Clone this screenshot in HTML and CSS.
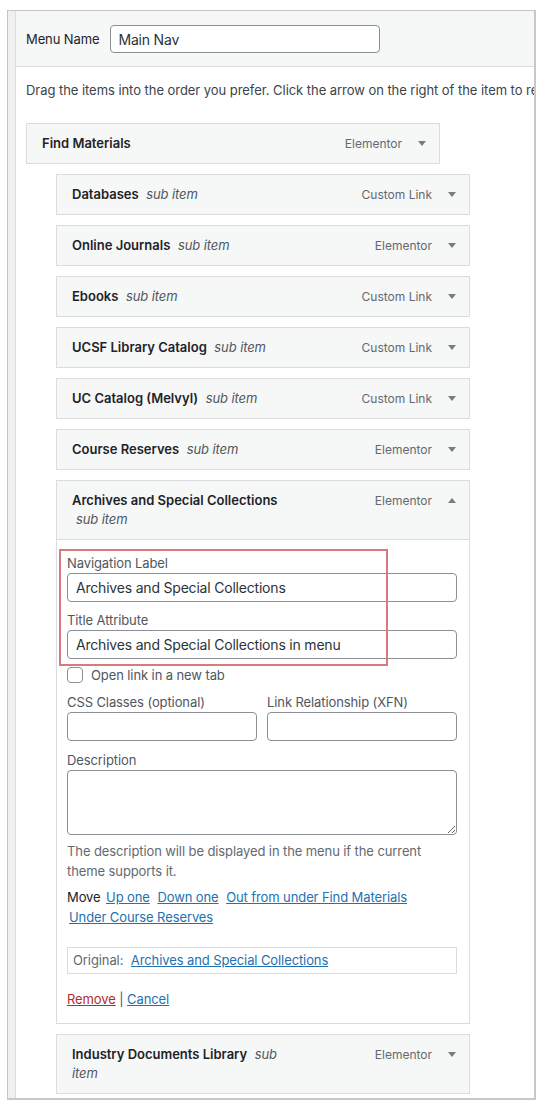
FILE: index.html
```
<!DOCTYPE html>
<html lang="en">
<head>
<meta charset="utf-8">
<title>Menu Structure</title>
<link rel="stylesheet" href="styles.css">
</head>
<body>
<div class="frame">
  <div class="strip"></div>
  <div class="main">
    <div class="menu-header">
      <label class="menu-name-label" for="menu-name">Menu Name</label>
      <input id="menu-name" class="menu-name-input" type="text" value="Main Nav">
    </div>
    <div class="menu-body">
      <p class="drag-instructions">Drag the items into the order you prefer. Click the arrow on the right of the item to reveal additional configuration options.</p>
      <ul class="menu-list">
        <li class="menu-item">
          <div class="item-handle">
            <span class="item-title"><span class="title-text">Find Materials</span></span>
            <span class="item-controls"><span class="item-type">Elementor</span><svg class="item-arrow" viewBox="0 0 8 5"><path d="M0 0H8L4 5Z"/></svg></span>
          </div>
        </li>
        <li class="menu-item depth-1">
          <div class="item-handle">
            <span class="item-title"><span class="title-text">Databases</span> <span class="is-submenu">sub item</span></span>
            <span class="item-controls"><span class="item-type">Custom Link</span><svg class="item-arrow" viewBox="0 0 8 5"><path d="M0 0H8L4 5Z"/></svg></span>
          </div>
        </li>
        <li class="menu-item depth-1">
          <div class="item-handle">
            <span class="item-title"><span class="title-text">Online Journals</span> <span class="is-submenu">sub item</span></span>
            <span class="item-controls"><span class="item-type">Elementor</span><svg class="item-arrow" viewBox="0 0 8 5"><path d="M0 0H8L4 5Z"/></svg></span>
          </div>
        </li>
        <li class="menu-item depth-1">
          <div class="item-handle">
            <span class="item-title"><span class="title-text">Ebooks</span> <span class="is-submenu">sub item</span></span>
            <span class="item-controls"><span class="item-type">Custom Link</span><svg class="item-arrow" viewBox="0 0 8 5"><path d="M0 0H8L4 5Z"/></svg></span>
          </div>
        </li>
        <li class="menu-item depth-1">
          <div class="item-handle">
            <span class="item-title"><span class="title-text">UCSF Library Catalog</span> <span class="is-submenu">sub item</span></span>
            <span class="item-controls"><span class="item-type">Custom Link</span><svg class="item-arrow" viewBox="0 0 8 5"><path d="M0 0H8L4 5Z"/></svg></span>
          </div>
        </li>
        <li class="menu-item depth-1">
          <div class="item-handle">
            <span class="item-title"><span class="title-text">UC Catalog (Melvyl)</span> <span class="is-submenu">sub item</span></span>
            <span class="item-controls"><span class="item-type">Custom Link</span><svg class="item-arrow" viewBox="0 0 8 5"><path d="M0 0H8L4 5Z"/></svg></span>
          </div>
        </li>
        <li class="menu-item depth-1">
          <div class="item-handle">
            <span class="item-title"><span class="title-text">Course Reserves</span> <span class="is-submenu">sub item</span></span>
            <span class="item-controls"><span class="item-type">Elementor</span><svg class="item-arrow" viewBox="0 0 8 5"><path d="M0 0H8L4 5Z"/></svg></span>
          </div>
        </li>
        <li class="menu-item depth-1 is-open">
          <div class="item-handle">
            <span class="item-title"><span class="title-text">Archives and Special Collections</span> <span class="is-submenu">sub item</span></span>
            <span class="item-controls"><span class="item-type">Elementor</span><svg class="item-arrow" viewBox="0 0 8 5"><path d="M0 5H8L4 0Z"/></svg></span>
          </div>
          <div class="item-settings">
            <div class="field">
              <label class="field-label" for="nav-label">Navigation Label</label>
              <input id="nav-label" class="field-input" type="text" value="Archives and Special Collections">
            </div>
            <div class="field field-title">
              <label class="field-label" for="title-attr">Title Attribute</label>
              <input id="title-attr" class="field-input" type="text" value="Archives and Special Collections in menu">
            </div>
            <div class="field-check">
              <span class="checkbox"></span>
              <span class="check-label">Open link in a new tab</span>
            </div>
            <div class="field-row">
              <div class="field-thin">
                <label class="field-label" for="css-classes">CSS Classes (optional)</label>
                <input id="css-classes" class="field-input thin" type="text">
              </div>
              <div class="field-thin">
                <label class="field-label" for="xfn">Link Relationship (XFN)</label>
                <input id="xfn" class="field-input thin" type="text">
              </div>
            </div>
            <div class="field field-desc">
              <label class="field-label" for="desc">Description</label>
              <textarea id="desc" class="field-textarea"></textarea>
              <p class="help-text">The description will be displayed in the menu if the current theme supports it.</p>
            </div>
            <p class="field-move">Move <a href="#">Up one</a> <a href="#">Down one</a> <a href="#">Out from under Find Materials</a> <a href="#">Under Course Reserves</a></p>
            <div class="original">Original: <a href="#">Archives and Special Collections</a></div>
            <p class="actions"><a class="remove" href="#">Remove</a> | <a href="#">Cancel</a></p>
            <div class="highlight"></div>
          </div>
        </li>
        <li class="menu-item depth-1">
          <div class="item-handle">
            <span class="item-title"><span class="title-text">Industry Documents Library</span> <span class="is-submenu">sub item</span></span>
            <span class="item-controls"><span class="item-type">Elementor</span><svg class="item-arrow" viewBox="0 0 8 5"><path d="M0 0H8L4 5Z"/></svg></span>
          </div>
        </li>
      </ul>
    </div>
  </div>
</div>
</body>
</html>
```

FILE: styles.css
```
* { box-sizing: border-box; }

body {
  margin: 0;
  background: #fff;
  font-family: Inter, "Liberation Sans", Arial, sans-serif;
  font-size: 13px;
  letter-spacing: -0.1px;
  color: #3c434a;
}

.frame {
  margin: 10px 0 0 7px;
  width: 529px;
  display: flex;
  border: 1px solid #c3c4c7;
  border-right: 2px solid #c8c8c8;
  border-bottom: 2px solid #c8c8c8;
}

.strip {
  flex: none;
  width: 8px;
  background: #f0f0f1;
  border-right: 1px solid #dcdcde;
}

.main {
  flex: 1;
  min-width: 0;
  overflow: hidden;
}

.menu-header {
  display: flex;
  align-items: center;
  background: #f6f7f7;
  border-bottom: 1px solid #dcdcde;
  padding: 14px 10px 13px;
}

.menu-name-label {
  color: #1d2327;
  margin-right: 10px;
  line-height: 20px;
}

.menu-name-input {
  width: 270px;
  height: 28px;
  margin: 0;
  padding: 0 8px;
  border: 1px solid #8c8f94;
  border-radius: 4px;
  font-family: Inter, "Liberation Sans", Arial, sans-serif;
  font-size: 14px;
  letter-spacing: -0.2px;
  color: #2c3338;
  background: #fff;
}

.drag-instructions {
  margin: 13px 0 0 10px;
  line-height: 20px;
  white-space: nowrap;
  letter-spacing: -0.05px;
  color: #3c434a;
}

.menu-list {
  list-style: none;
  margin: 23px 0 0;
  padding: 0 0 4px 10px;
}

.menu-item {
  width: 414px;
}

.menu-item + .menu-item {
  margin-top: 10px;
}

.depth-1 {
  margin-left: 30px;
}

.item-handle {
  display: flex;
  align-items: flex-start;
  border: 1px solid #dcdcde;
  background: #f6f7f7;
  padding: 10px 13px 10px 15px;
  line-height: 19px;
}

.item-title {
  width: 212px;
  color: #1d2327;
}

.title-text {
  font-weight: 600;
  letter-spacing: 0;
  white-space: nowrap;
}

.is-submenu {
  font-style: italic;
  font-weight: 400;
  color: #50575e;
  padding-left: 4px;
}

.item-controls {
  margin-left: auto;
  display: flex;
  align-items: center;
  height: 19px;
  color: #646970;
}

.item-type {
  font-size: 12px;
  letter-spacing: 0;
}

.item-arrow {
  width: 8px;
  height: 5px;
  margin-left: 16px;
  fill: #787c82;
}

.item-settings {
  position: relative;
  background: #fff;
  border: 1px solid #dcdcde;
  border-top: none;
  padding: 13px 10px 14px;
}

.field-label {
  display: block;
  line-height: 20px;
  color: #50575e;
}

.field-input {
  display: block;
  width: 390px;
  height: 29px;
  margin: 0;
  padding: 0 8px;
  border: 1px solid #8c8f94;
  border-radius: 4px;
  background: #fff;
  font-family: Inter, "Liberation Sans", Arial, sans-serif;
  font-size: 14px;
  letter-spacing: -0.2px;
  color: #2c3338;
}

.field-input.thin {
  width: 190px;
}

.field-title {
  margin-top: 8px;
}

.field-check {
  display: flex;
  align-items: center;
  margin-top: 8px;
  height: 16px;
  color: #50575e;
}

.checkbox {
  width: 16px;
  height: 16px;
  border: 1px solid #8c8f94;
  border-radius: 4px;
  background: #fff;
  margin-right: 8px;
}

.field-row {
  display: flex;
  gap: 10px;
  margin-top: 9px;
}

.field-desc {
  margin-top: 9px;
}

.field-textarea {
  display: block;
  width: 390px;
  height: 65px;
  margin: 0;
  border: 1px solid #8c8f94;
  border-radius: 4px;
  background: #fff;
  font-family: Inter, "Liberation Sans", Arial, sans-serif;
  font-size: 14px;
}

.help-text {
  width: 390px;
  margin: 6px 0 0;
  line-height: 20px;
  color: #646970;
}

.field-move {
  width: 390px;
  margin: 7px 0 0;
  line-height: 19.5px;
  color: #1d2327;
}

a {
  color: #2271b1;
  text-decoration: underline;
}

.field-move a {
  margin: 0 2px;
  white-space: nowrap;
}

.original {
  width: 390px;
  height: 27px;
  margin-top: 20px;
  padding: 0 5px;
  border: 1px solid #dcdcde;
  line-height: 25px;
  color: #646970;
}

.original a {
  margin-left: 4px;
}

.actions {
  margin: 15px 0 0;
  line-height: 20px;
  color: #50575e;
}

.actions .remove {
  color: #b32d2e;
}

.highlight {
  position: absolute;
  left: 2px;
  top: 9px;
  width: 329px;
  height: 117px;
  border: 2px solid #d67a7b;
  pointer-events: none;
}
```
